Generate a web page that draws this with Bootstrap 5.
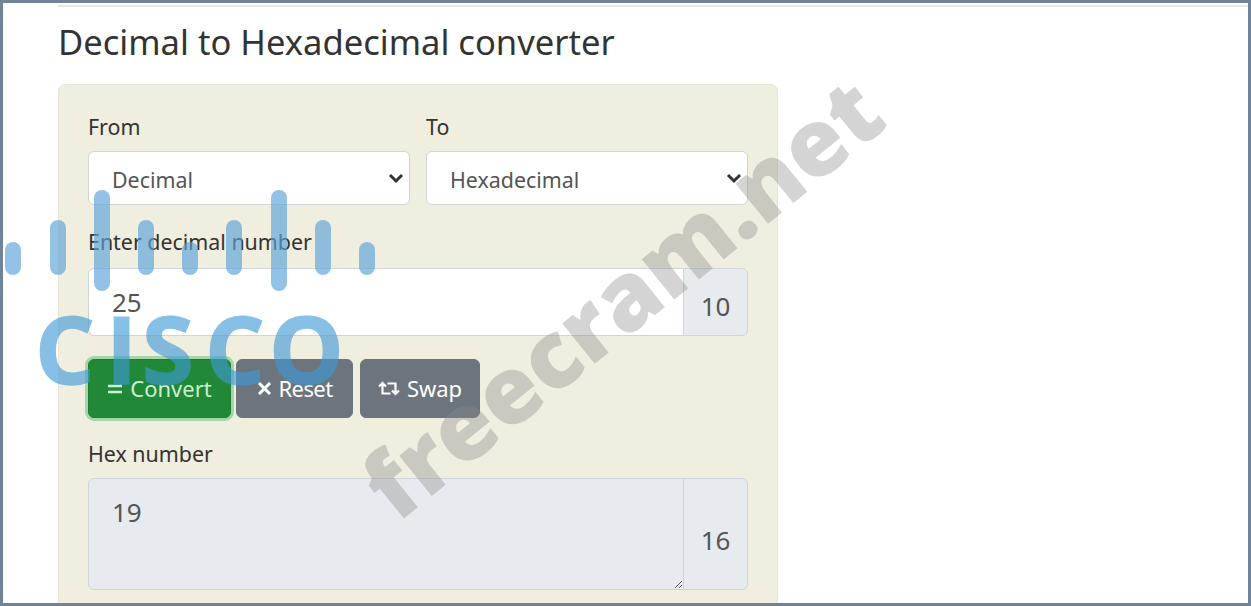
<!DOCTYPE html>
<html lang="en">
<head>
  <meta charset="UTF-8">
  <title>Decimal to Hexadecimal converter</title>
  <link rel="stylesheet" href="https://cdn.jsdelivr.net/npm/bootstrap@5.3.0/dist/css/bootstrap.min.css">
  <style>
    html, body { height: 100%; overflow: hidden; }
    body { font-family: "Noto Sans", "Open Sans", sans-serif; color: #333; background: #fff; }
    .shot-frame { position: relative; height: 606px; border: 3px solid #6f8499; overflow: hidden; padding: 0 0 0 55px; }
    .top-rule { height: 2px; background: #e4e6ea; margin-top: 2px; }
    .page-title { font-size: 34.6px; font-weight: 400; line-height: 40px; margin: 15px 0 22px; color: #333; }
    .conv-panel { width: 720px; height: 540px; padding: 27px 29px 0; background: #f0eede; border: 1px solid #e8e6d8; border-radius: 7px; }
    .conv-label { font-size: 21.4px; line-height: 30px; margin-bottom: 9px; color: #333; }
    .conv-label.label-tight { margin-top: 22px; margin-bottom: 11px; }
    .conv-panel .form-select { height: 54px; font-size: 21.4px; padding: 4px 40px 0 23px; color: #555; border-color: #ced4da; border-radius: 6px;
      background-image: url("data:image/svg+xml,%3csvg xmlns='http://www.w3.org/2000/svg' viewBox='0 0 16 12'%3e%3cpath fill='none' stroke='%23333' stroke-width='3' d='M2 3l6 6 6-6'/%3e%3c/svg%3e");
      background-size: 16px 12px; background-position: right 5px center; }
    .conv-panel .form-control { font-size: 26px; color: #555; padding: 14px 23px; border-color: #ced4da; }
    .conv-panel .input-group-text { width: 65px; font-size: 26px; color: #555; justify-content: center; background: #e7eaee; border-color: #ced4da; }
    .addon-short { padding-top: 15px; }
    .addon-tall { padding-top: 18px; }
    .num-input { height: 68px; }
    .num-output { height: 112px; background-color: #e7eaee !important; }
    .conv-btn { height: 59px; font-size: 22px; padding: 0; border-radius: 6px; display: inline-flex; align-items: center; justify-content: center; gap: 7px; }
    .conv-btn.btn-success { width: 143px; background: #218838; border-color: #1e7e34; color: #c9f2d2; box-shadow: 0 0 0 3px #a3d7a9; }
    .conv-btn.btn-secondary { background: #6c757d; border-color: #6c757d; }
    .btn-reset { width: 117px; letter-spacing: -.6px; }
    .btn-swap { width: 120px; margin-left: 2px; }
    .btn-row { gap: 5px; margin: 23px 0 21px; }
    .overlay-art { position: absolute; left: -3px; top: -3px; pointer-events: none; }
    .cisco-bars rect { fill: #5ba3d9; opacity: .66; }
    .cisco-word { font-family: "Open Sans", sans-serif; font-weight: 700; font-size: 94px; fill: #3f9ad8; stroke: #3f9ad8; stroke-width: 1.5px; opacity: .62; }
    .wm-text { font-family: "Open Sans", sans-serif; font-weight: 800; font-size: 93.5px; fill: #8a8a8a; opacity: .36; }
  </style>
</head>
<body>
  <div class="shot-frame">
    <div class="top-rule"></div>
    <h1 class="page-title">Decimal to Hexadecimal converter</h1>

    <form class="conv-panel">
      <div class="row gx-3 conv-selects">
        <div class="col-6">
          <label class="conv-label d-block">From</label>
          <select class="form-select"><option>Decimal</option></select>
        </div>
        <div class="col-6">
          <label class="conv-label d-block">To</label>
          <select class="form-select"><option>Hexadecimal</option></select>
        </div>
      </div>

      <label class="conv-label label-tight d-block">Enter decimal number</label>
      <div class="input-group">
        <input type="text" class="form-control num-input" value="25">
        <span class="input-group-text addon-short">10</span>
      </div>

      <div class="d-flex btn-row">
        <button type="button" class="btn btn-success conv-btn">
          <svg width="16" height="12" viewBox="0 0 16 12"><path d="M1 3h14M1 9h14" stroke="currentColor" stroke-width="2.6"/></svg>Convert
        </button>
        <button type="button" class="btn btn-secondary conv-btn btn-reset">
          <svg width="15" height="15" viewBox="0 0 15 15"><path d="M2 2l11 11M13 2L2 13" stroke="currentColor" stroke-width="3"/></svg>Reset
        </button>
        <button type="button" class="btn btn-secondary conv-btn btn-swap">
          <svg width="22" height="15" viewBox="0 0 22 15" fill="none" stroke="currentColor" stroke-width="2.2"><path d="M4.500 2v10.500h8M1 5.500l3.500-3.500 3.500 3.500M17.500 13V2.500h-8M14 9.500l3.500 3.500 3.500-3.500"/></svg>Swap
        </button>
      </div>

      <label class="conv-label d-block">Hex number</label>
      <div class="input-group">
        <textarea class="form-control num-output" readonly>19</textarea>
        <span class="input-group-text addon-tall">16</span>
      </div>
    </form>

    <svg class="overlay-art" width="1251" height="606" viewBox="0 0 1251 606">
      <g class="cisco-bars">
        <rect x="5" y="242" width="16" height="33" rx="8"/>
        <rect x="50" y="220" width="16" height="55" rx="8"/>
        <rect x="94" y="190" width="16" height="101" rx="8"/>
        <rect x="138" y="220" width="16" height="55" rx="8"/>
        <rect x="182" y="242" width="16" height="33" rx="8"/>
        <rect x="226" y="220" width="16" height="55" rx="8"/>
        <rect x="271" y="190" width="16" height="101" rx="8"/>
        <rect x="315" y="220" width="16" height="55" rx="8"/>
        <rect x="359" y="242" width="16" height="33" rx="8"/>
      </g>
      <text class="cisco-word" x="35 106 142 205 269" y="384">CISCO</text>
      <text class="wm-text" transform="translate(397 524) rotate(-39)">freecram.net</text>
    </svg>
  </div>
  <script src="https://cdn.jsdelivr.net/npm/bootstrap@5.3.0/dist/js/bootstrap.bundle.min.js"></script>
</body>
</html>
